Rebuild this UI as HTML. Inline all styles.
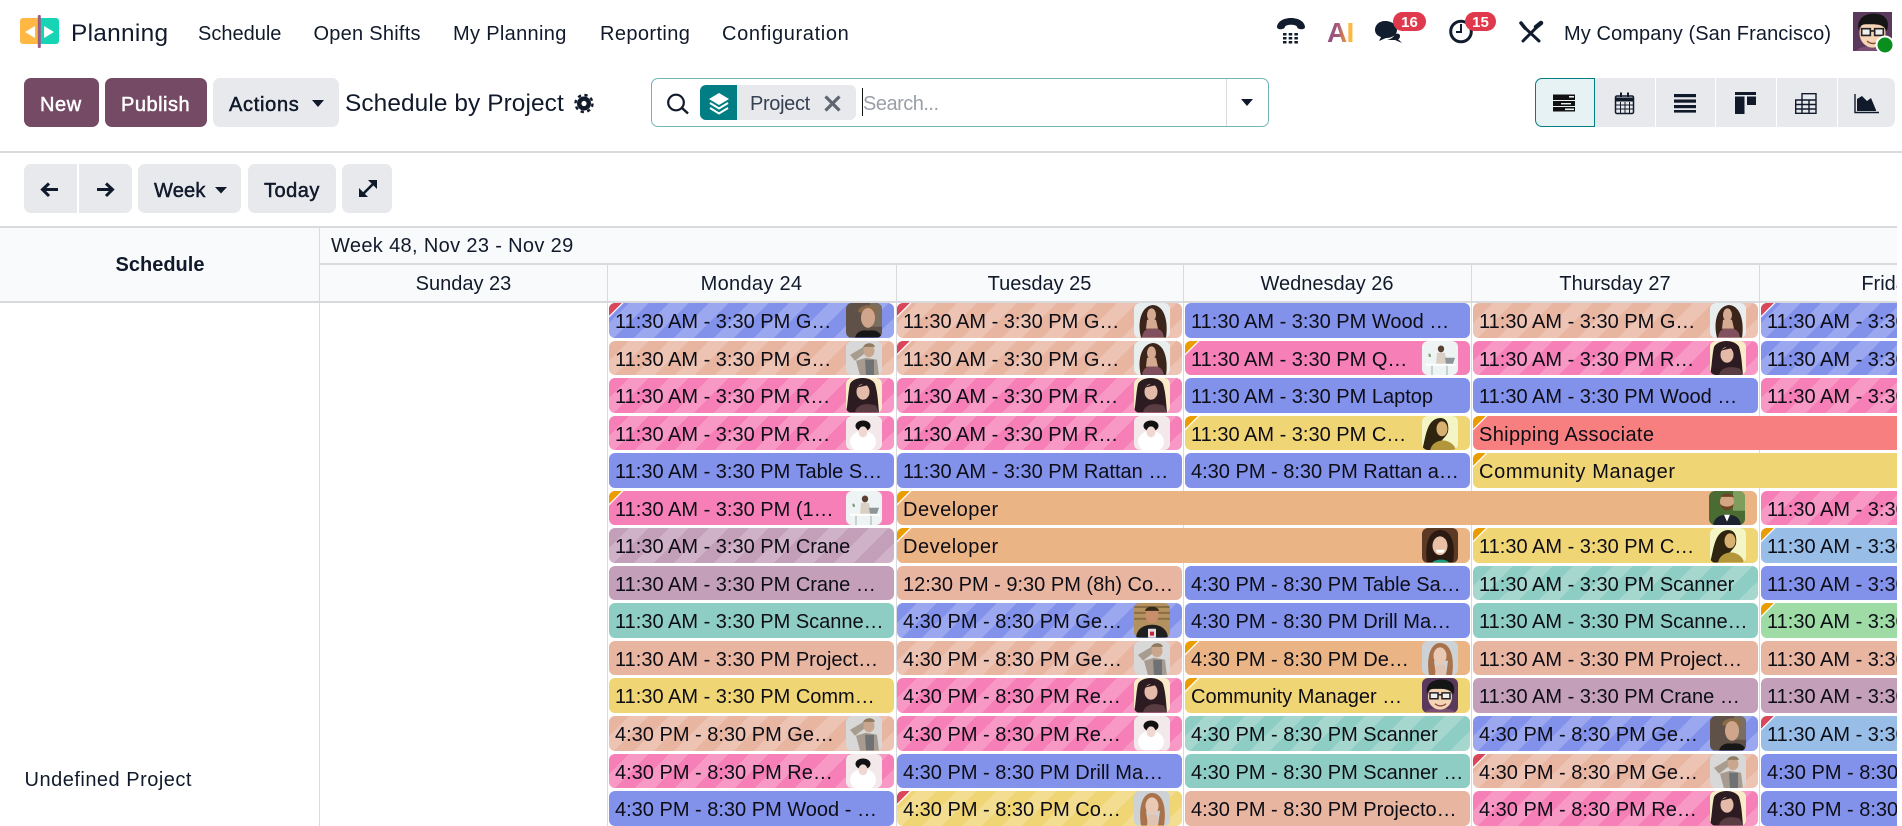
<!DOCTYPE html>
<html lang="en"><head><meta charset="utf-8"><title>Planning</title>
<style>
*{box-sizing:border-box}
html,body{margin:0;padding:0;width:1902px;height:826px;overflow:hidden;background:#fff;font-family:"Liberation Sans",sans-serif;font-size:20px;color:#111a2b}
.t{position:absolute;white-space:nowrap;line-height:30px;height:30px}
.btn{position:absolute;background:#e7e9ed;border-radius:7px;white-space:nowrap;line-height:54px;height:49px;-webkit-text-stroke:.5px currentColor;color:#111a2b}
.pri{background:#744a65;color:#fff}
.ln{position:absolute;background:#d8dadd}
.hd{position:absolute;background:#f9fafb}
#clip{position:absolute;left:0;top:0;width:1897px;height:826px;overflow:hidden}
.c{position:absolute;top:284px;width:288px;text-align:center;line-height:30px;height:30px;margin-top:-15px;white-space:nowrap;color:#111a2b}
.p{position:absolute;height:34.6px;width:285px;border-radius:6px;padding-left:6px;line-height:38px;overflow:hidden;white-space:nowrap;color:#0d0d16}
.s{background-image:linear-gradient(-45deg,rgba(255,255,255,.2) 25%,transparent 25%,transparent 50%,rgba(255,255,255,.2) 50%,rgba(255,255,255,.2) 75%,transparent 75%,transparent);background-size:40px 40px}
.rc:before,.oc:before{content:"";position:absolute;left:0;top:0;width:18px;height:18px}
.rc:before{background:linear-gradient(135deg,#d9475a 9px,rgba(255,255,255,.85) 9px 10.5px,transparent 10.5px)}
.oc:before{background:linear-gradient(135deg,#e99d00 9px,rgba(255,255,255,.85) 9px 10.5px,transparent 10.5px)}
.av{position:absolute;right:12px;top:0;width:36px;height:100%;border-radius:6px;display:block}
.r0{top:303px}.r1{top:340.5px}.r2{top:378px}.r3{top:415.6px}.r4{top:453.2px}.r5{top:490.7px}.r6{top:528.2px}.r7{top:565.8px}.r8{top:603.3px}.r9{top:640.9px}.r10{top:678.4px}.r11{top:716px}.r12{top:753.5px}.r13{top:791px}
.c1{left:609px}.c2{left:897px}.c3{left:1185px}.c4{left:1473px}.c5{left:1761px}
.b{background-color:#8291ea}.e{background-color:#e8b5a0}.k{background-color:#f67fb7}.m{background-color:#c39fb9}.g{background-color:#8ecdc3}.y{background-color:#f0d574}.o{background-color:#ebb484}.r{background-color:#f87f7f}.l{background-color:#98bee8}.n{background-color:#9edba5}
</style></head><body>

<svg width="0" height="0" style="position:absolute">
<symbol id="a1" viewBox="0 0 36 35" preserveAspectRatio="none"><rect width="36" height="35" fill="#5f5147"/><rect x="24" width="12" height="24" fill="#7a6e60"/><path d="M12 9C13 1 29 0 31 7L30 12 16 10Z" fill="#8b6b47"/><ellipse cx="22" cy="15" rx="7" ry="10" fill="#cfa68c"/><path d="M9 35C11 28 17 27 22 28 30 27 34 29 36 35Z" fill="#171717"/></symbol>
<symbol id="a2" viewBox="0 0 36 35" preserveAspectRatio="none"><rect width="36" height="35" fill="#d8d8d8"/><path d="M4 14L19 5 22 10 9 20Z" fill="#a89c8e"/><ellipse cx="23" cy="10" rx="5.5" ry="6.5" fill="#c9a78f"/><path d="M17 6C19 1 28 1 29 6Z" fill="#8f7a5f"/><path d="M10 20L20 17 31 19 33 35H14Z" fill="#a69b8e"/><path d="M19 19H28V35H20Z" fill="#6f7275"/></symbol>
<symbol id="a3" viewBox="0 0 36 35" preserveAspectRatio="none"><rect width="36" height="35" fill="#f8ecc8"/><path d="M4 6C8-2 25-2 29 6 32 16 32 26 33 35H0C2 25 2 15 4 6Z" fill="#2d1b22"/><path d="M9 35C10 28 18 24 30 28L33 35Z" fill="#5a3d42"/><ellipse cx="17" cy="14" rx="6.5" ry="8" fill="#e3bba8"/><path d="M10 10L20 4 25 13 23 7Z" fill="#2d1b22"/></symbol>
<symbol id="a4" viewBox="0 0 36 35" preserveAspectRatio="none"><rect width="36" height="35" fill="#f3e9ea"/><ellipse cx="17" cy="26" rx="13" ry="11" fill="#fff"/><ellipse cx="17" cy="10" rx="7.5" ry="5.5" fill="#111"/><ellipse cx="17" cy="16" rx="4.5" ry="5.5" fill="#f0d8d2"/></symbol>
<symbol id="a5" viewBox="0 0 36 35" preserveAspectRatio="none"><rect width="36" height="35" fill="#e8eeee"/><path d="M7 35C3 20 7 3 19 2 32 3 34 22 32 35Z" fill="#3b2419"/><ellipse cx="17.5" cy="12" rx="4.5" ry="6.5" fill="#d6aa90"/><path d="M13 17H22L24 26 12 26Z" fill="#d6aa90"/><path d="M8 35C9 27 14 25 18 26 24 25 29 27 30 35Z" fill="#80505e"/></symbol>
<symbol id="a6" viewBox="0 0 36 35" preserveAspectRatio="none"><rect width="36" height="35" fill="#eef3f3"/><ellipse cx="19" cy="8" rx="3.2" ry="3.5" fill="#5a4030"/><path d="M15 12H23L25 24H14Z" fill="#d9cfc4"/><path d="M4 23H34V25H4Z" fill="#fff"/><path d="M23 17H33L31 23H24Z" fill="#8e9498"/><path d="M7 16C5 12 9 11 9 16Z" fill="#7a9a7a"/><path d="M9 25H11V35H9ZM24 25H26V35H24Z" fill="#c8d0d0"/></symbol>
<symbol id="a7" viewBox="0 0 36 35" preserveAspectRatio="none"><rect width="36" height="35" fill="#f4f5c4"/><path d="M0 35C4 22 4 3 18 2 26 2 27 10 26 16 24 22 18 24 14 35Z" fill="#2e2410"/><ellipse cx="20" cy="13" rx="5.5" ry="7.5" fill="#d8b070"/><path d="M8 35C10 26 18 24 24 25 30 27 33 30 34 35Z" fill="#b4963a"/></symbol>
<symbol id="a8" viewBox="0 0 36 35" preserveAspectRatio="none"><rect width="36" height="35" fill="#4a6c33"/><rect x="24" width="12" height="20" fill="#7f9d5d"/><ellipse cx="18" cy="11" rx="7" ry="8" fill="#d3a583"/><path d="M11 12C12 22 24 22 25 12 24 17 12 17 11 12Z" fill="#6b4426"/><path d="M12 6C13 1 23 1 25 6Z" fill="#6b4426"/><path d="M4 35C5 26 12 24 18 24 25 24 31 26 32 35Z" fill="#1d2230"/><path d="M15 24H21L18 31Z" fill="#fff"/></symbol>
<symbol id="a9" viewBox="0 0 36 35" preserveAspectRatio="none"><rect width="36" height="35" fill="#5c3a24"/><path d="M5 35C2 15 8 2 18 2 29 2 34 15 31 35Z" fill="#2a1a12"/><ellipse cx="18" cy="18" rx="7.5" ry="9.5" fill="#e9bfa6"/><path d="M14 22H23L21 25H15Z" fill="#fff"/><path d="M10 35C14 31 24 31 27 35Z" fill="#18a082"/></symbol>
<symbol id="a10" viewBox="0 0 36 35" preserveAspectRatio="none"><rect width="36" height="35" fill="#b49260"/><path d="M0 4H36M0 10H36M0 16H36" stroke="#8a6d42" stroke-width="2"/><ellipse cx="18" cy="12" rx="6.5" ry="8.5" fill="#c98f6c"/><path d="M11 8C12 2 24 2 25 8Z" fill="#3a2a1a"/><path d="M2 35C3 25 11 22 18 22 25 22 33 25 34 35Z" fill="#1f1f1f"/><path d="M14 26H22V35H14Z" fill="#e8e0e0"/><path d="M16 29H20V33H16Z" fill="#c8243a"/></symbol>
<symbol id="a11" viewBox="0 0 36 35" preserveAspectRatio="none"><rect width="36" height="35" fill="#ccd2d6"/><path d="M7 35C4 15 9 2 18 2 28 2 33 15 30 35H24L26 20 12 20 14 35Z" fill="#a9724a"/><ellipse cx="18" cy="15" rx="6.5" ry="8.5" fill="#e9c9b3"/><path d="M14 24H23L24 35H13Z" fill="#e0c3b2"/></symbol>
<symbol id="a12" viewBox="0 0 36 35" preserveAspectRatio="none"><rect width="36" height="35" fill="#5a3a5c"/><path d="M3 35C6 29 30 29 33 35Z" fill="#7a4e72"/><ellipse cx="18" cy="19" rx="12" ry="13" fill="#f5d3b5"/><path d="M5 16C3 4 14 0 24 2 34 4 33 14 31 17 28 10 20 11 12 11 8 11 6 13 5 16Z" fill="#151515"/><path d="M8 15H16V21H8ZM20 15H28V21H20ZM16 17H20" fill="#eee" stroke="#222" stroke-width="1.5"/><path d="M13 26C16 29 21 29 24 26" stroke="#8a4a3a" stroke-width="1.3" fill="none"/></symbol>
</svg>

<!-- top nav -->
<div class="t" style="left:71px;top:19px;font-size:24.4px;letter-spacing:.3px">Planning</div>
<div class="t" style="left:198px;top:19px">Schedule</div>
<div class="t" style="left:313.5px;top:19px;letter-spacing:.25px">Open Shifts</div>
<div class="t" style="left:453px;top:19px;letter-spacing:.33px">My Planning</div>
<div class="t" style="left:600px;top:19px;letter-spacing:.4px">Reporting</div>
<div class="t" style="left:722px;top:19px;letter-spacing:.65px">Configuration</div>
<div class="t" style="left:1564px;top:19px;letter-spacing:.1px">My Company (San Francisco)</div>

<!-- control panel -->
<div class="btn pri" style="left:24px;top:78px;width:75px;padding-left:16px;letter-spacing:.6px">New</div>
<div class="btn pri" style="left:105px;top:78px;width:102px;padding-left:16px;letter-spacing:.5px">Publish</div>
<div class="btn" style="left:213px;top:78px;width:126px;padding-left:16px;letter-spacing:.7px">Actions</div>
<div class="t" style="left:345px;top:89px;font-size:24.4px;letter-spacing:.1px">Schedule by Project</div>

<div style="position:absolute;left:651px;top:78px;width:618px;height:49px;border:1px solid #72b5b8;border-radius:7px"></div>
<div style="position:absolute;left:1226px;top:79px;width:1px;height:47px;background:#d8dadd"></div>
<div style="position:absolute;left:700px;top:85px;width:156px;height:35px;background:#e7e9ed;border-radius:6px"></div>
<div style="position:absolute;left:700px;top:85px;width:37px;height:35px;background:#017e84;border-radius:6px 0 0 6px"></div>
<div class="t" style="left:750px;top:89px;color:#374151;letter-spacing:-.35px">Project</div>
<div class="t" style="left:863px;top:89px;color:#9aa0a8;letter-spacing:-.5px">Search...</div>
<div style="position:absolute;left:862px;top:88px;width:1px;height:28px;background:#111"></div>

<div style="position:absolute;left:1535px;top:78px;width:60px;height:49px;background:#e6f2f3;border:1px solid #017e84;border-radius:7px 0 0 7px"></div>
<div style="position:absolute;left:1595px;top:78px;width:60px;height:49px;background:#e7e9ed"></div>
<div style="position:absolute;left:1656px;top:78px;width:59px;height:49px;background:#e7e9ed"></div>
<div style="position:absolute;left:1716px;top:78px;width:60px;height:49px;background:#e7e9ed"></div>
<div style="position:absolute;left:1777px;top:78px;width:60px;height:49px;background:#e7e9ed"></div>
<div style="position:absolute;left:1838px;top:78px;width:57px;height:49px;background:#e7e9ed;border-radius:0 7px 7px 0"></div>

<div class="ln" style="left:0;top:151px;width:1902px;height:1.5px"></div>

<!-- second row -->
<div class="btn" style="left:24px;top:164px;width:53px;border-radius:7px 0 0 7px"></div>
<div class="btn" style="left:79px;top:164px;width:53px;border-radius:0 7px 7px 0"></div>
<div class="btn" style="left:138px;top:164px;width:103px;padding-left:16px;letter-spacing:.2px">Week</div>
<div class="btn" style="left:248px;top:164px;width:88px;padding-left:16px;letter-spacing:.5px">Today</div>
<div class="btn" style="left:342px;top:164px;width:50px"></div>

<!-- gantt -->
<div id="clip">
<div class="hd" style="left:0;top:227px;width:1897px;height:74px"></div>
<div class="ln" style="left:0;top:226px;width:1897px;height:1.5px"></div>
<div class="ln" style="left:319px;top:263px;width:1578px;height:1.5px"></div>
<div class="ln" style="left:0;top:301px;width:1897px;height:1.5px"></div>
<div class="ln" style="left:319px;top:227px;width:1px;height:599px"></div>
<div class="ln" style="left:607px;top:264px;width:1px;height:562px"></div>
<div class="ln" style="left:895.5px;top:264px;width:1px;height:562px"></div>
<div class="ln" style="left:1183px;top:264px;width:1px;height:562px"></div>
<div class="ln" style="left:1471px;top:264px;width:1px;height:562px"></div>
<div class="ln" style="left:1759px;top:264px;width:1px;height:562px"></div>

<div class="t" style="left:115px;top:250px;font-weight:bold;width:90px;text-align:center">Schedule</div>
<div class="t" style="left:331px;top:231px;letter-spacing:.35px">Week 48, Nov 23 - Nov 29</div>
<div class="c" style="left:319.5px">Sunday 23</div>
<div class="c" style="left:607.5px;letter-spacing:.3px">Monday 24</div>
<div class="c" style="left:895.5px">Tuesday 25</div>
<div class="c" style="left:1183px">Wednesday 26</div>
<div class="c" style="left:1471px">Thursday 27</div>
<div class="c" style="left:1759px">Friday 28</div>
<div class="t" style="left:24.5px;top:765px;letter-spacing:.5px">Undefined Project</div>

<!-- row 0 -->
<div class="p r0 c1 b s rc">11:30 AM - 3:30 PM G…<svg class="av"><use href="#a1"/></svg></div>
<div class="p r0 c2 e s rc">11:30 AM - 3:30 PM G…<svg class="av"><use href="#a5"/></svg></div>
<div class="p r0 c3 b">11:30 AM - 3:30 PM Wood …</div>
<div class="p r0 c4 e s">11:30 AM - 3:30 PM G…<svg class="av"><use href="#a5"/></svg></div>
<div class="p r0 c5 b s rc">11:30 AM - 3:30 PM</div>
<!-- row 1 -->
<div class="p r1 c1 e s">11:30 AM - 3:30 PM G…<svg class="av"><use href="#a2"/></svg></div>
<div class="p r1 c2 e s rc">11:30 AM - 3:30 PM G…<svg class="av"><use href="#a5"/></svg></div>
<div class="p r1 c3 k oc">11:30 AM - 3:30 PM Q…<svg class="av"><use href="#a6"/></svg></div>
<div class="p r1 c4 k s">11:30 AM - 3:30 PM R…<svg class="av"><use href="#a3"/></svg></div>
<div class="p r1 c5 b s">11:30 AM - 3:30 PM</div>
<!-- row 2 -->
<div class="p r2 c1 k s">11:30 AM - 3:30 PM R…<svg class="av"><use href="#a3"/></svg></div>
<div class="p r2 c2 k s">11:30 AM - 3:30 PM R…<svg class="av"><use href="#a3"/></svg></div>
<div class="p r2 c3 b">11:30 AM - 3:30 PM Laptop</div>
<div class="p r2 c4 b">11:30 AM - 3:30 PM Wood …</div>
<div class="p r2 c5 k s">11:30 AM - 3:30 PM</div>
<!-- row 3 -->
<div class="p r3 c1 k s">11:30 AM - 3:30 PM R…<svg class="av"><use href="#a4"/></svg></div>
<div class="p r3 c2 k s">11:30 AM - 3:30 PM R…<svg class="av"><use href="#a4"/></svg></div>
<div class="p r3 c3 y oc">11:30 AM - 3:30 PM C…<svg class="av"><use href="#a7"/></svg></div>
<div class="p r3 c4 r oc" style="width:600px;letter-spacing:.35px">Shipping Associate</div>
<!-- row 4 -->
<div class="p r4 c1 b">11:30 AM - 3:30 PM Table S…</div>
<div class="p r4 c2 b">11:30 AM - 3:30 PM Rattan …</div>
<div class="p r4 c3 b">4:30 PM - 8:30 PM Rattan a…</div>
<div class="p r4 c4 y oc" style="width:600px;letter-spacing:.65px">Community Manager</div>
<!-- row 5 -->
<div class="p r5 c1 k oc">11:30 AM - 3:30 PM (1…<svg class="av"><use href="#a6"/></svg></div>
<div class="p r5 c2 o oc" style="width:860px;letter-spacing:.5px">Developer<svg class="av"><use href="#a8"/></svg></div>
<div class="p r5 c5 k s">11:30 AM - 3:30 PM</div>
<!-- row 6 -->
<div class="p r6 c1 m s">11:30 AM - 3:30 PM Crane</div>
<div class="p r6 c2 o oc" style="width:573px;letter-spacing:.5px">Developer<svg class="av"><use href="#a9"/></svg></div>
<div class="p r6 c4 y oc">11:30 AM - 3:30 PM C…<svg class="av"><use href="#a7"/></svg></div>
<div class="p r6 c5 l oc">11:30 AM - 3:30 PM</div>
<!-- row 7 -->
<div class="p r7 c1 m">11:30 AM - 3:30 PM Crane …</div>
<div class="p r7 c2 e">12:30 PM - 9:30 PM (8h) Co…</div>
<div class="p r7 c3 b">4:30 PM - 8:30 PM Table Sa…</div>
<div class="p r7 c4 g s">11:30 AM - 3:30 PM Scanner</div>
<div class="p r7 c5 b">11:30 AM - 3:30 PM</div>
<!-- row 8 -->
<div class="p r8 c1 g">11:30 AM - 3:30 PM Scanne…</div>
<div class="p r8 c2 b s">4:30 PM - 8:30 PM Ge…<svg class="av"><use href="#a10"/></svg></div>
<div class="p r8 c3 b">4:30 PM - 8:30 PM Drill Ma…</div>
<div class="p r8 c4 g">11:30 AM - 3:30 PM Scanne…</div>
<div class="p r8 c5 n oc">11:30 AM - 3:30 PM</div>
<!-- row 9 -->
<div class="p r9 c1 e">11:30 AM - 3:30 PM Project…</div>
<div class="p r9 c2 e s">4:30 PM - 8:30 PM Ge…<svg class="av"><use href="#a2"/></svg></div>
<div class="p r9 c3 o oc">4:30 PM - 8:30 PM De…<svg class="av"><use href="#a11"/></svg></div>
<div class="p r9 c4 e">11:30 AM - 3:30 PM Project…</div>
<div class="p r9 c5 e">11:30 AM - 3:30 PM</div>
<!-- row 10 -->
<div class="p r10 c1 y">11:30 AM - 3:30 PM Comm…</div>
<div class="p r10 c2 k s">4:30 PM - 8:30 PM Re…<svg class="av"><use href="#a3"/></svg></div>
<div class="p r10 c3 y oc">Community Manager …<svg class="av"><use href="#a12"/></svg></div>
<div class="p r10 c4 m">11:30 AM - 3:30 PM Crane …</div>
<div class="p r10 c5 m">11:30 AM - 3:30 PM</div>
<!-- row 11 -->
<div class="p r11 c1 e s">4:30 PM - 8:30 PM Ge…<svg class="av"><use href="#a2"/></svg></div>
<div class="p r11 c2 k s">4:30 PM - 8:30 PM Re…<svg class="av"><use href="#a4"/></svg></div>
<div class="p r11 c3 g s">4:30 PM - 8:30 PM Scanner</div>
<div class="p r11 c4 b s">4:30 PM - 8:30 PM Ge…<svg class="av"><use href="#a1"/></svg></div>
<div class="p r11 c5 l rc">11:30 AM - 3:30 PM</div>
<!-- row 12 -->
<div class="p r12 c1 k s">4:30 PM - 8:30 PM Re…<svg class="av"><use href="#a4"/></svg></div>
<div class="p r12 c2 b">4:30 PM - 8:30 PM Drill Ma…</div>
<div class="p r12 c3 g">4:30 PM - 8:30 PM Scanner …</div>
<div class="p r12 c4 e s rc">4:30 PM - 8:30 PM Ge…<svg class="av"><use href="#a2"/></svg></div>
<div class="p r12 c5 b">4:30 PM - 8:30 PM</div>
<!-- row 13 -->
<div class="p r13 c1 b">4:30 PM - 8:30 PM Wood - …</div>
<div class="p r13 c2 y s rc">4:30 PM - 8:30 PM Co…<svg class="av"><use href="#a11"/></svg></div>
<div class="p r13 c3 e">4:30 PM - 8:30 PM Projecto…</div>
<div class="p r13 c4 k s">4:30 PM - 8:30 PM Re…<svg class="av"><use href="#a3"/></svg></div>
<div class="p r13 c5 b">4:30 PM - 8:30 PM</div>
</div>

<!-- icon overlay -->
<svg width="1902" height="826" viewBox="0 0 1902 826" style="position:absolute;left:0;top:0;pointer-events:none">
<defs><linearGradient id="ag" x1="0" x2="1" y1="0" y2="0"><stop offset="0" stop-color="#8f4f82"/><stop offset=".55" stop-color="#a8577a"/><stop offset="1" stop-color="#f0a030"/></linearGradient></defs>
<!-- logo -->
<path d="M23 18H40V44H23A3 3 0 0 1 20 41V21A3 3 0 0 1 23 18Z" fill="#ffb843"/>
<path d="M39 18H56A3 3 0 0 1 59 21V41A3 3 0 0 1 56 44H39Z" fill="#17d4b4"/>
<path d="M25 32L35 26V38Z M54 32L44 26V38Z" fill="#fff"/>
<rect x="37.8" y="15" width="3" height="33" rx="1" fill="#9b5d86"/>
<!-- phone -->
<g fill="#111c2e"><path d="M1277 27C1278 15 1304 15 1305 27 1305 30 1298 30 1297 27 1297 24 1285 24 1285 27 1284 30 1277 30 1277 27Z"/>
<rect x="1283" y="33" width="3.5" height="2.5"/><rect x="1288.7" y="33" width="3.5" height="2.5"/><rect x="1294.4" y="33" width="3.5" height="2.5"/><rect x="1283" y="37" width="3.5" height="2.5"/><rect x="1288.7" y="37" width="3.5" height="2.5"/><rect x="1294.4" y="37" width="3.5" height="2.5"/><rect x="1283" y="41" width="3.5" height="2.5"/><rect x="1288.7" y="41" width="3.5" height="2.5"/><rect x="1294.4" y="41" width="3.5" height="2.5"/></g>
<!-- AI -->
<text x="1327" y="42" font-family="Liberation Sans" font-weight="bold" font-size="28" fill="url(#ag)">A</text>
<text x="1346.5" y="42" font-family="Liberation Sans" font-weight="bold" font-size="28" fill="#fdb840">I</text>
<!-- chat -->
<g fill="#111c2e"><path d="M1385 21C1392 21 1397 25 1397 30 1397 35 1392 38 1386 38L1379 41 1381 37C1377 36 1375 33 1375 30 1375 25 1379 21 1385 21Z"/><path d="M1395 34C1398 33 1400 34 1400 36 1400 38 1399 39 1398 39L1402 43 1395 40 1387 40C1391 39 1394 37 1395 34Z"/></g>
<!-- clock -->
<circle cx="1461" cy="31.5" r="10.3" fill="#fff" stroke="#111c2e" stroke-width="3"/>
<path d="M1461 24V32H1456" fill="none" stroke="#111c2e" stroke-width="2"/>
<!-- badges -->
<rect x="1393" y="12" width="33" height="19" rx="9.5" fill="#e0384c"/>
<text x="1409.5" y="27" text-anchor="middle" fill="#fff" font-family="Liberation Sans" font-weight="bold" font-size="15">16</text>
<rect x="1465" y="12" width="31" height="19" rx="9.5" fill="#e0384c"/>
<text x="1480.5" y="27" text-anchor="middle" fill="#fff" font-family="Liberation Sans" font-weight="bold" font-size="15">15</text>
<!-- tools -->
<g stroke="#111c2e" fill="none" stroke-linecap="round"><path d="M1524 27L1539 41" stroke-width="3"/><path d="M1537 27L1523 41" stroke-width="3"/><path d="M1536 27L1541 23" stroke-width="4.5"/><path d="M1521 23L1525 28" stroke-width="3.5"/></g>
<!-- user avatar -->
<g><svg x="1853" y="12" width="39" height="39"><use href="#a12"/></svg></g>
<circle cx="1885" cy="45" r="8.5" fill="#0a8f1e" stroke="#fff" stroke-width="2"/>
<!-- carets -->
<path d="M312 100H324L318 107Z M215 187H227L221 193.5Z M1241 99H1253L1247 106Z" fill="#111a2b"/>
<!-- gear -->
<circle cx="584" cy="103.5" r="7" fill="#111a2b"/>
<circle cx="584" cy="103.5" r="8.5" fill="none" stroke="#111a2b" stroke-width="2.4" stroke-dasharray="3.3 3.4"/>
<circle cx="584" cy="103.5" r="2.6" fill="#fff"/>
<!-- search -->
<circle cx="676" cy="102.5" r="7.8" fill="none" stroke="#111a2b" stroke-width="2.2"/>
<path d="M682 108L688 113.5" stroke="#111a2b" stroke-width="2.4"/>
<!-- layers -->
<path d="M719 93L729 99 719 105 709 99Z" fill="#fff"/>
<path d="M710 103L719 108.5 728 103M710 108L719 113.5 728 108" fill="none" stroke="#fff" stroke-width="2"/>
<!-- facet x -->
<path d="M825.5 96.5L839.5 110.5M839.5 96.5L825.5 110.5" stroke="#5f6672" stroke-width="3.2"/>
<!-- view icons -->
<g fill="#111" >
<rect x="1553" y="94.5" width="22" height="5.5"/><rect x="1553" y="101" width="22" height="5"/><rect x="1553" y="107" width="22" height="4.5"/>
<rect x="1569" y="96" width="5" height="1.6" fill="#e6f2f3"/><rect x="1561" y="103" width="10" height="1.4" fill="#e6f2f3"/><rect x="1565" y="108.5" width="9" height="1.6" fill="#e6f2f3"/>
</g>
<g fill="none" stroke="#111a2b"><rect x="1615.5" y="96" width="18" height="17.5" rx="1.5" stroke-width="1.5"/><path d="M1615 99.5H1634" stroke-width="4"/><path d="M1620.5 102V113M1625 102V113M1629.5 102V113M1616 105H1633M1616 109H1633" stroke-width="1"/><path d="M1621 92.5V97M1628 92.5V97" stroke-width="2"/></g>
<g fill="#111a2b"><rect x="1674" y="94" width="22" height="3.2"/><rect x="1674" y="99.5" width="22" height="3.2"/><rect x="1674" y="105" width="22" height="3.2"/><rect x="1674" y="110" width="22" height="2.6"/></g>
<g fill="#111a2b"><rect x="1735" y="92" width="21" height="3"/><rect x="1735" y="96.5" width="9.5" height="17.5"/><rect x="1747" y="96.5" width="9" height="8.5"/></g>
<g fill="none" stroke="#111a2b" stroke-width="1.4"><path d="M1802 93.7H1816V113.3H1795.7V100H1802ZM1802 93.7V113.3M1809 100V113.3M1795.7 100H1816M1795.7 104.5H1816M1795.7 109H1816"/></g>
<path d="M1855 94V112.5H1879" fill="none" stroke="#111a2b" stroke-width="1.4"/>
<path d="M1857 111V99L1862 96 1867 101 1871 98 1876 110V111Z" fill="#111a2b"/>
<!-- arrows -->
<path d="M58 189.5H43M49 183.5L42.5 189.5 49 196" fill="none" stroke="#111a2b" stroke-width="3"/>
<path d="M97 189.5H112M106 183.5L112.5 189.5 106 196" fill="none" stroke="#111a2b" stroke-width="3"/>
<path d="M362 195L374 183" stroke="#111a2b" stroke-width="2.6"/>
<path d="M368 180H377V189Z M359 188V197H368Z" fill="#111a2b"/>
</svg>
</body></html>
